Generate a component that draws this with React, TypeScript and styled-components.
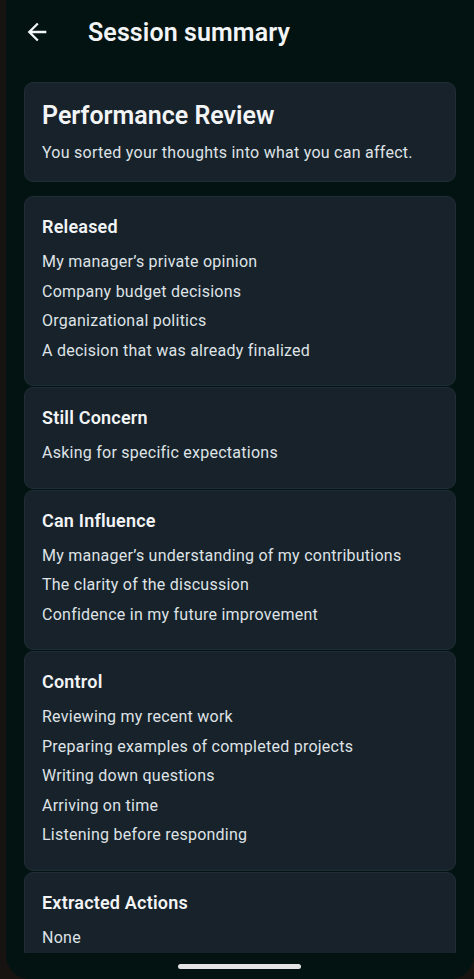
import styled, { createGlobalStyle } from "styled-components";

const GlobalStyle = createGlobalStyle`
  html, body {
    margin: 0;
    padding: 0;
    background: #171311;
  }
  body {
    font-family: Roboto, "Noto Sans", "Liberation Sans", sans-serif;
  }
`;

const Frame = styled.div`
  display: flex;
  width: 474px;
  height: 979px;
  background: #171311;
  overflow: hidden;
`;

const Screen = styled.div`
  flex: 1;
  display: flex;
  flex-direction: column;
  margin-left: 6px;
  background: #021312;
  border-radius: 0 0 24px 24px;
  overflow: hidden;
`;

const TopBar = styled.header`
  display: flex;
  align-items: center;
  height: 64px;
  padding-left: 17px;
  flex-shrink: 0;
`;

const BackButton = styled.button`
  display: flex;
  align-items: center;
  justify-content: center;
  width: 28px;
  height: 28px;
  padding: 0;
  border: none;
  background: none;
  color: #f2f4f5;
  cursor: pointer;
`;

const Title = styled.h1`
  margin: 0 0 0 37px;
  font-size: 25px;
  font-weight: 600;
  color: #f2f4f5;
  letter-spacing: 0.1px;
`;

const Scroll = styled.main`
  flex: 1;
  overflow: hidden;
  padding: 18px 18px 0 18px;
  display: flex;
  flex-direction: column;
`;

const Card = styled.section<{ $spaced?: boolean }>`
  background: #17222b;
  border: 1px solid #212d36;
  border-radius: 9px;
  padding: 17px 17px 20px;
  margin-bottom: ${(p) => (p.$spaced ? "14px" : "1px")};
  flex-shrink: 0;
`;

const IntroCard = styled(Card)`
  padding: 17px 17px 16px;
`;

const IntroTitle = styled.h2`
  margin: 0;
  font-size: 25px;
  line-height: 32px;
  font-weight: 600;
  color: #f2f4f5;
`;

const IntroText = styled.p`
  margin: 9px 0 0;
  font-size: 16px;
  line-height: 24px;
  color: #dfe3e6;
  letter-spacing: 0.26px;
`;

const SectionTitle = styled.h3`
  margin: 0;
  font-size: 18px;
  line-height: 26px;
  font-weight: 600;
  color: #f2f4f5;
  letter-spacing: 0.2px;
`;

const ItemList = styled.ul`
  list-style: none;
  margin: 7px 0 0;
  padding: 0;
`;

const Item = styled.li`
  font-size: 16px;
  line-height: 29.5px;
  color: #dfe3e6;
  letter-spacing: 0.25px;
`;

const NavBar = styled.div`
  height: 26px;
  flex-shrink: 0;
  display: flex;
  align-items: center;
  justify-content: center;
`;

const Handle = styled.div`
  width: 123px;
  height: 5px;
  border-radius: 3px;
  background: #e4e4e4;
  margin-right: 1px;
`;

const sections = [
  {
    title: "Released",
    items: [
      "My manager\u2019s private opinion",
      "Company budget decisions",
      "Organizational politics",
      "A decision that was already finalized",
    ],
  },
  { title: "Still Concern", items: ["Asking for specific expectations"] },
  {
    title: "Can Influence",
    items: [
      "My manager\u2019s understanding of my contributions",
      "The clarity of the discussion",
      "Confidence in my future improvement",
    ],
  },
  {
    title: "Control",
    items: [
      "Reviewing my recent work",
      "Preparing examples of completed projects",
      "Writing down questions",
      "Arriving on time",
      "Listening before responding",
    ],
  },
  { title: "Extracted Actions", items: ["None"] },
];

export default function App() {
  return (
    <>
      <GlobalStyle />
      <Frame>
        <Screen>
          <TopBar>
            <BackButton aria-label="Back">
              <svg width="28" height="28" viewBox="0 0 24 24" fill="currentColor">
                <path d="M20 11H7.83l5.59-5.59L12 4l-8 8 8 8 1.41-1.41L7.83 13H20v-2z" />
              </svg>
            </BackButton>
            <Title>Session summary</Title>
          </TopBar>
          <Scroll>
            <IntroCard $spaced>
              <IntroTitle>Performance Review</IntroTitle>
              <IntroText>You sorted your thoughts into what you can affect.</IntroText>
            </IntroCard>
            {sections.map((s) => (
              <Card key={s.title}>
                <SectionTitle>{s.title}</SectionTitle>
                <ItemList>
                  {s.items.map((it) => (
                    <Item key={it}>{it}</Item>
                  ))}
                </ItemList>
              </Card>
            ))}
          </Scroll>
          <NavBar>
            <Handle />
          </NavBar>
        </Screen>
      </Frame>
    </>
  );
}
